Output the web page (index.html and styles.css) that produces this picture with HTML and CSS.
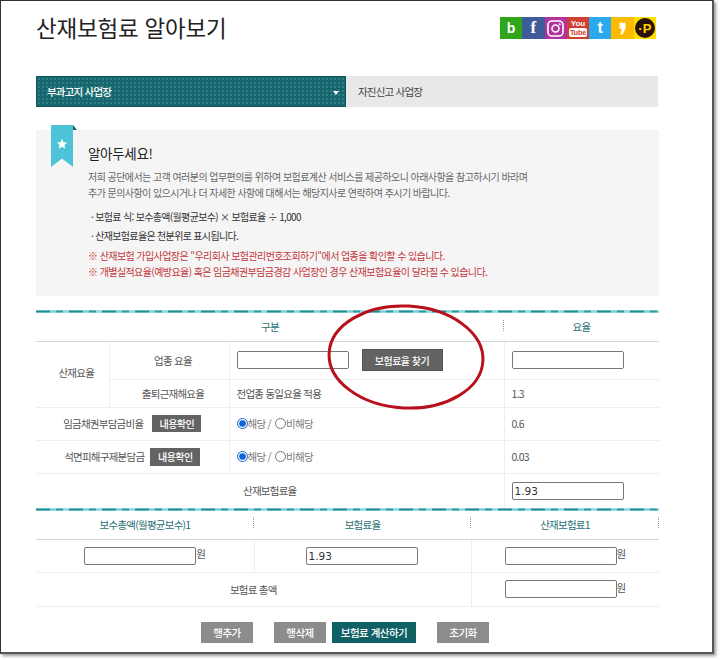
FILE: index.html
```html
<!DOCTYPE html>
<html lang="ko">
<head>
<meta charset="utf-8">
<title>산재보험료 알아보기</title>
<link rel="stylesheet" href="styles.css">
</head>
<body>
<div class="window">
  <header class="top">
    <h1 class="title">산재보험료 알아보기</h1>
    <div class="social">
      <span class="sns sns-b">b</span>
      <span class="sns sns-f">f</span>
      <span class="sns sns-i"><svg width="17" height="17" viewBox="0 0 17 17"><rect x="1" y="1" width="15" height="15" rx="4" fill="none" stroke="#fff" stroke-width="1.6"/><circle cx="8.5" cy="8.5" r="3.5" fill="none" stroke="#fff" stroke-width="1.6"/><circle cx="12.8" cy="4.2" r="1" fill="#fff"/></svg></span>
      <span class="sns sns-y"><span class="yt-you">You</span><span class="yt-tube">Tube</span></span>
      <span class="sns sns-t">t</span>
      <span class="sns sns-k"><svg width="7" height="13" viewBox="0 0 8 15"><path d="M0.5 1h7v6.500L4 14.500H1.500L3.200 8H0.500z" fill="#fff"/></svg></span>
      <span class="sns sns-p"><span class="p-circle">·P</span></span>
    </div>
  </header>

  <nav class="tabs">
    <div class="tab tab-on"><span>부과고지 사업장</span><i class="caret"></i></div>
    <div class="tab tab-off">자진신고 사업장</div>
  </nav>

  <section class="notice">
    <div class="ribbon">
      <svg width="26" height="43" viewBox="0 0 26 43">
        <path d="M22 0L26 5h-4z" fill="#17636a"/>
        <path d="M0 0h22v42l-11-8.500L0 42z" fill="#4cc3d6"/>
        <path d="M11 13.800l1.500 3.500 3.700.3-2.800 2.400.9 3.700-3.300-2-3.300 2 .9-3.700-2.800-2.400 3.700-.3z" fill="#fff"/>
      </svg>
    </div>
    <h2 class="notice-title">알아두세요!</h2>
    <p class="desc">저희 공단에서는 고객 여러분의 업무편의를 위하여 보험료계산 서비스를 제공하오니 아래사항을 참고하시기 바라며</p>
    <p class="desc">추가 문의사항이 있으시거나 더 자세한 사항에 대해서는 해당지사로 연락하여 주시기 바랍니다.</p>
    <p class="bullet first">· 보험료 식: 보수총액(월평균보수) × 보험료율 ÷ 1,000</p>
    <p class="bullet">· 산재보험료율은 천분위로 표시됩니다.</p>
    <p class="warn first">※ 산재보험 가입사업장은 "우리회사 보험관리번호조회하기"에서 업종을 확인할 수 있습니다.</p>
    <p class="warn">※ 개별실적요율(예방요율) 혹은 임금채권부담금경감 사업장인 경우 산재보험요율이 달라질 수 있습니다.</p>
  </section>

  <div class="tealline tl-1"></div>
  <table class="grid grid-a">
    <colgroup><col class="a1"><col class="a2"><col class="a3"><col class="a4"></colgroup>
    <tr class="h28 head">
      <th colspan="3"><span class="sep">구분</span></th>
      <th>요율</th>
    </tr>
    <tr class="h38">
      <td rowspan="2" class="c shift rise">산재요율</td>
      <td class="c vl shift">업종 요율</td>
      <td class="vl"><div class="findrow"><input class="field f112" type="text"><button class="btn btn-dark btn-find" type="button">보험료율 찾기</button></div></td>
      <td class="vl"><input class="field f112" type="text"></td>
    </tr>
    <tr class="h28">
      <td class="c vl shift">출퇴근재해요율</td>
      <td class="vl">전업종 동일요율 적용</td>
      <td class="vl">1.3</td>
    </tr>
    <tr class="h33">
      <td colspan="2" class="c"><span class="rowlabel">임금채권부담금비율<button class="btn btn-dark btn-check" type="button">내용확인</button></span></td>
      <td class="vl"><label class="radio"><input type="radio" name="r1" checked>해당 / </label><label class="radio"><input type="radio" name="r1">비해당</label></td>
      <td class="vl">0.6</td>
    </tr>
    <tr class="h33">
      <td colspan="2" class="c"><span class="rowlabel rowlabel-tight">석면피해구제분담금<button class="btn btn-dark btn-check btn-check-wide" type="button">내용확인</button></span></td>
      <td class="vl"><label class="radio"><input type="radio" name="r2" checked>해당 / </label><label class="radio"><input type="radio" name="r2">비해당</label></td>
      <td class="vl">0.03</td>
    </tr>
    <tr class="h35 noline">
      <td colspan="3" class="c">산재보험료율</td>
      <td class="vl"><input class="field f112" type="text" value="1.93"></td>
    </tr>
  </table>

  <div class="tealline tl-2"></div>
  <table class="grid grid-b">
    <colgroup><col class="b1"><col class="b2"><col class="b3"></colgroup>
    <tr class="h28 head">
      <th><span class="sep">보수총액(월평균보수)1</span></th>
      <th><span class="sep">보험료율</span></th>
      <th><span class="sep sep-last">산재보험료1</span></th>
    </tr>
    <tr class="h33">
      <td class="c"><input class="field f112" type="text">원</td>
      <td class="c vl nudge"><input class="field f112" type="text" value="1.93"></td>
      <td class="c vl won"><input class="field f112" type="text">원</td>
    </tr>
    <tr class="h34">
      <td colspan="2" class="c">보험료 총액</td>
      <td class="c vl won"><input class="field f112" type="text">원</td>
    </tr>
  </table>

  <div class="actions">
    <button class="btn btn-grey" type="button">행추가</button>
    <button class="btn btn-grey gap-l" type="button">행삭제</button>
    <button class="btn btn-teal" type="button">보험료 계산하기</button>
    <button class="btn btn-grey gap-l" type="button">초기화</button>
  </div>

  <svg class="ellipse" width="164" height="114" viewBox="0 0 164 114"><ellipse cx="81" cy="57" rx="77" ry="51" fill="none" stroke="#b9111c" stroke-width="3" transform="rotate(3 81 57)"/></svg>
</div>
</body>
</html>
```

FILE: styles.css
```css
* { box-sizing: border-box; }
html, body { margin: 0; padding: 0; background: #fff; }
body {
  width: 720px; height: 660px; overflow: hidden;
  font-family: "Noto Sans CJK KR", "Noto Sans", sans-serif;
  color: #555;
  font-size: 11px;
}
.window {
  position: relative;
  width: 714px; height: 654px;
  padding: 0 54px 0 35px;
  background: #fff;
  border: 1px solid #333;
  border-right-width: 2px;
  border-bottom-width: 2px;
  border-right-color: #555;
  border-bottom-color: #555;
  box-shadow: 2px 2px 3px #999;
}
.top { display: flex; justify-content: space-between; height: 75px; }
.title {
  margin: 9px 0 0; font-size: 22.500px; font-weight: 400; line-height: 34px; color: #222; letter-spacing: -0.200px;
}
.social { display: flex; height: 22px; margin: 16px 2px 0 0; }
.sns {
  width: 22.300px; height: 22px; display: flex; align-items: center; justify-content: center;
  color: #fff; font-family: "Liberation Sans", sans-serif; font-weight: 700; font-size: 14px;
}
.sns-b { background: #2fa51c; }
.sns-f { background: #3f5c9a; font-size: 17px; font-family: "Liberation Serif", serif; }
.sns-i { background: #b3339e; }
.sns-y { background: #d23e30; flex-direction: column; line-height: 8px; }
.yt-you { font-size: 8px; line-height: 9px; font-family: "Liberation Sans Narrow", "Liberation Sans", sans-serif; }
.yt-tube { font-size: 7.500px; line-height: 9px; background: #fff; color: #d23e30; border-radius: 2px; padding: 0 1px; letter-spacing: -0.300px; }
.sns-t { background: #2aa9ee; font-size: 16px; }
.sns-k { background: #fdbb00; }
.sns-p { background: #fde000; }
.p-circle {
  width: 20px; height: 20px; border-radius: 50%; background: #2a1206; color: #fdd000;
  display: flex; align-items: center; justify-content: center; font-size: 13px;
}
.tabs { display: flex; width: 622px; height: 31px; }
.tab { display: flex; align-items: center; font-size: 10.500px; letter-spacing: -0.800px; }
.tab-on {
  position: relative;
  width: 310px; padding: 0 6px 0 10px; justify-content: space-between; color: #fff; font-weight: 500;
  background-color: #17666d;
  background-image: radial-gradient(circle, #2b7f85 1px, transparent 1.300px);
  background-size: 4px 4px;
  border: 1px solid #0f555b;
}
.caret { width: 0; height: 0; margin-top: 2px; border: 3.500px solid transparent; border-top: 4px solid #fff; border-bottom: 0; }
.tab-off { flex: 1; padding-left: 12px; background: #e8e8e8; color: #444; }
.notice {
  position: relative; width: 623px; height: 166px; margin-top: 23px; padding: 13px 0 0 52px; background: #f5f5f5;
}
.ribbon { position: absolute; left: 15px; top: -5px; height: 43px; }
.ribbon svg { display: block; }
.notice p { margin: 0; white-space: nowrap; }
.notice-title { margin: 0; font-size: 13.500px; font-weight: 400; line-height: 20px; color: #222; letter-spacing: -0.300px; }
.desc { font-size: 10px; line-height: 16px; color: #666; letter-spacing: -0.560px; margin-top: 0; }
.notice-title + .desc { margin-top: 6px; }
.bullet { font-size: 10px; line-height: 19px; color: #333; padding-left: 3px; letter-spacing: -0.670px; }
.bullet.first { margin-top: 6px; }
.warn { font-size: 10px; line-height: 16px; color: #c2353a; letter-spacing: -0.580px; }
.warn.first { margin-top: 3px; }
.tealline {
  width: 623px; height: 3px;
  background:
    linear-gradient(180deg, rgba(190,234,236,.75), rgba(190,234,236,0) 45%, rgba(190,234,236,0) 55%, rgba(190,234,236,.75)),
    repeating-linear-gradient(90deg, #1d8e94 0 14px, #7ccdd2 14px 20px, #2a9aa0 20px 27px, #8ed6da 27px 33px);
}
.tl-1 { margin-top: 14px; }
.tl-2 { margin-top: 0; }
.grid { width: 623px; table-layout: fixed; border-collapse: collapse; color: #555; font-size: 10.500px; }
.a1 { width: 73px; } .a2 { width: 120px; } .a3 { width: 275px; } .a4 { width: 155px; }
.b1 { width: 218px; } .b2 { width: 217px; } .b3 { width: 188px; }
.grid td, .grid th { padding: 0; border-bottom: 1px solid #eee; white-space: nowrap; font-weight: 400; letter-spacing: -0.750px; }
.grid td { padding-left: 7px; }
.grid td.c { padding-left: 0; text-align: center; }
.grid td.shift { padding-left: 8px; }
.grid td.rise { padding-bottom: 3px; }
.grid td.nudge { padding-right: 2px; }
.grid td.won { text-align: left; padding-left: 33px; }
.grid .vl { border-left: 1px solid #eee; }
.grid .noline td { border-bottom: 0; }
.h38 { height: 38px; } .h28 { height: 28px; } .h33 { height: 33px; } .h34 { height: 34px; } .h35 { height: 35px; }
.head th { color: #1f6f74; border-bottom: 1px solid #d5d5d5; }
.sep { position: relative; display: block; }
.sep::after {
  content: ""; position: absolute; right: 0; top: 0; height: 11px; border-right: 1px dotted #999;
}
.grid-a .sep::after { top: 1px; right: 0; }
.field {
  width: 112px; height: 18px; margin: 0; padding: 0 2px; vertical-align: middle;
  border: 1px solid #767676; border-radius: 2px; background: #fff; color: #333;
  font-family: "DejaVu Sans", sans-serif; font-size: 10.500px;
}
.findrow { display: flex; align-items: center; gap: 13px; }
.btn {
  border: 0; margin: 0; padding: 0; color: #fff; font-family: inherit; font-weight: 500; font-size: 10px; letter-spacing: -0.500px;
}
.btn-dark { background: #636363; }
.btn-find { width: 81px; height: 22px; border: 1px solid #555; }
.rowlabel { display: inline-flex; align-items: center; gap: 9px; }
.rowlabel-tight { gap: 6px; }
.btn-check { width: 49px; height: 17px; }
.btn-check-wide { width: 50px; height: 18px; }
.radio { display: inline-flex; align-items: center; white-space: pre; color: #777; }
.radio input { width: 11px; height: 11px; margin: 0; accent-color: #0f62d6; }
.radio + .radio { margin-left: 2px; }
.actions { display: flex; margin-top: 15px; padding-left: 165px; width: 623px; gap: 6px; }
.actions .btn { height: 21px; font-size: 10.500px; }
.btn-grey { width: 52px; background: #8c8c8c; }
.btn-teal { width: 84px; background: #0f6166; }
.gap-l { margin-left: 15px; }
.ellipse { position: absolute; left: 324px; top: 299px; pointer-events: none; }
```
